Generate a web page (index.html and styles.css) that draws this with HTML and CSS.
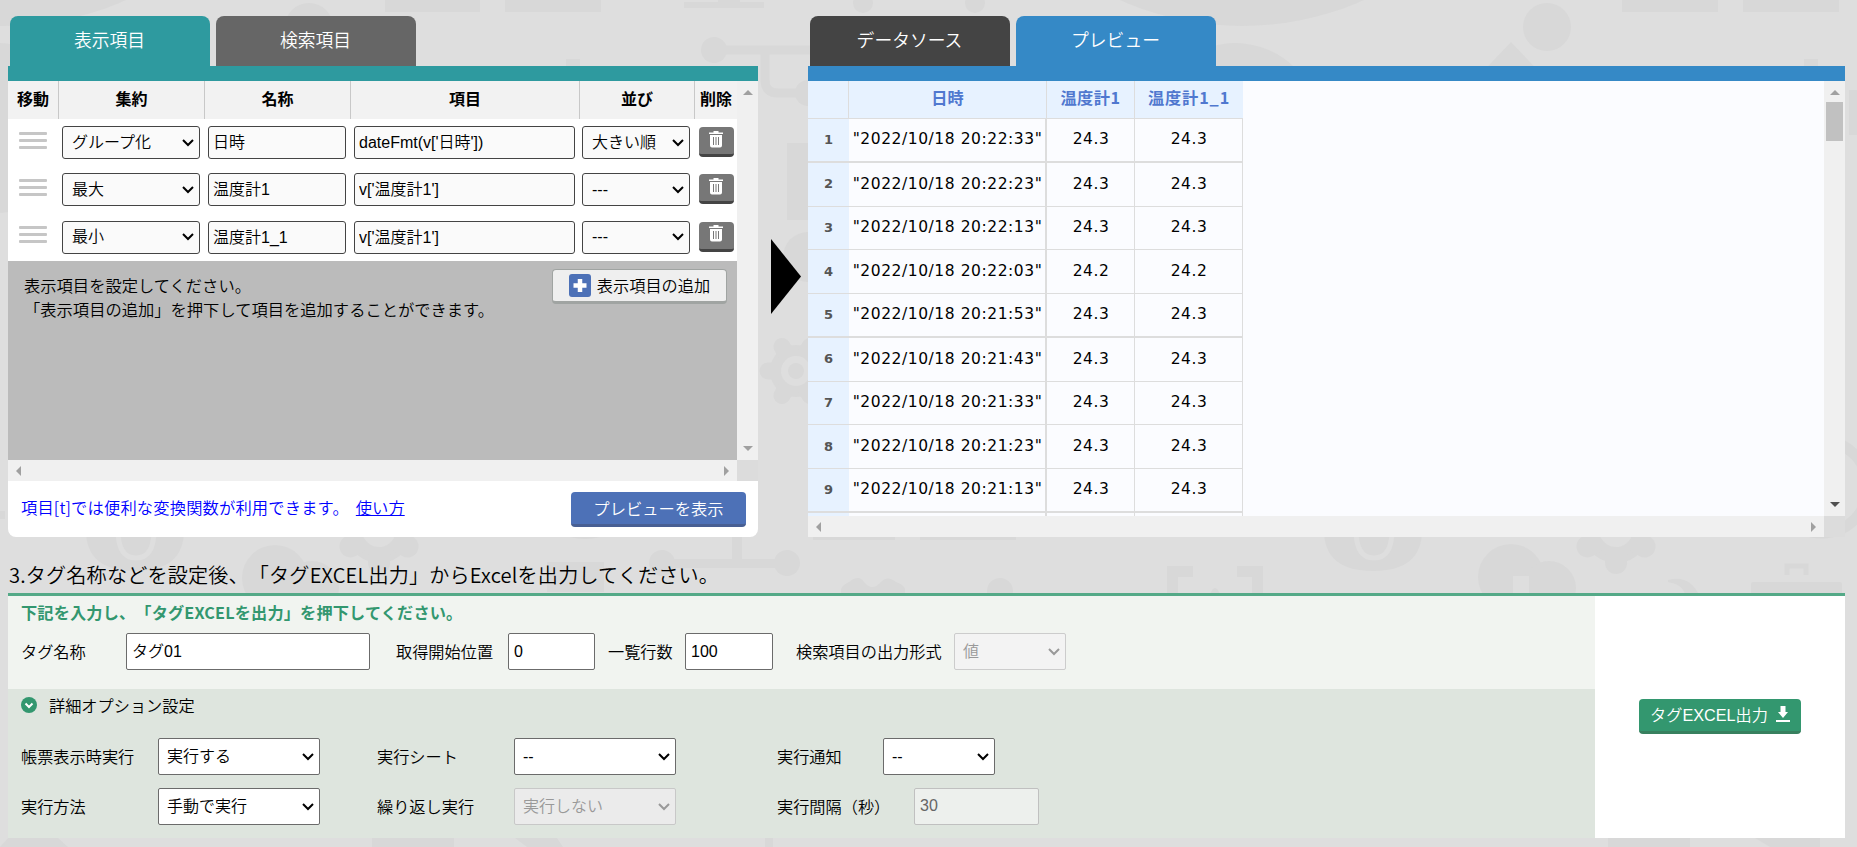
FILE: index.html
```
<!DOCTYPE html>
<html lang="ja">
<head>
  <meta charset="UTF-8" />
  <meta name="viewport" content="width=device-width, initial-scale=1.0"/>
  <title>タグEXCEL出力</title>
  <link rel="stylesheet" href="styles.css">
</head>
<body>
  <svg class="bg" viewBox="0 0 1857 847" fill="#d8d8d8">
    <circle cx="4" cy="-274" r="300"/>
    <circle cx="1242" cy="-274" r="300"/>
    <circle cx="-3" cy="128" r="85"/>
    <circle cx="1235" cy="128" r="85"/>
    <circle cx="309" cy="27" r="24"/>
    <circle cx="1547" cy="27" r="24"/>
    <path d="M1511 42l40 42h-80z"/>
    <path d="M385 0h95v12h-95zM505 0h96v12h-96zM1622 0h96v12h-96zM1743 0h96v12h-96z"/>
    <path d="M684 2h80v6h-80zM718 0h22v3h-22zM566 59h14v10h-14zM1804 59h14v10h-14z"/>
    <circle cx="863" cy="3" r="10"/>
    <circle cx="975" cy="3" r="10"/>
    <circle cx="714" cy="50" r="13"/>
    <circle cx="808" cy="93" r="13"/>
    <path d="M714 50h96M765 52v28q0 13 13 13h30" fill="none" stroke="#d8d8d8" stroke-width="9"/>
    <path d="M787 143h30v77h-30zM1849 90h10v45h-10zM0 175h8v35h-8zM0 511h5v8h-5z"/>
    <circle cx="808" cy="257" r="25"/>
    <!-- gears -->
    <g id="gear" transform="translate(796 371)">
      <circle r="26"/>
      <g stroke="#d8d8d8" stroke-width="17" stroke-linecap="round">
        <path d="M-28 0H28M-14 -24.500L14 24.500M14 -24.500L-14 24.500"/>
      </g>
      <circle r="15" fill="#dedede"/>
      <circle r="8"/>
    </g>
    <g id="gear-big" transform="translate(379 530) rotate(30)">
      <circle r="33"/>
      <g stroke="#d8d8d8" stroke-width="22" stroke-linecap="round">
        <path d="M-33 0H33M-16.500 -28.500L16.500 28.500M16.500 -28.500L-16.500 28.500"/>
      </g>
      <circle r="17" fill="#dedede"/>
    </g>
    <use href="#gear-big" transform="translate(1237 0)"/>
    <!-- microphones -->
    <g id="mic">
      <path d="M86 500h98v30q0 41-49 41t-49-41z"/>
      <path d="M118 530q0 28 18 28t18-28" fill="none" stroke="#dedede" stroke-width="5"/>
    </g>
    <use href="#mic" transform="translate(1238 0)"/>
    <circle cx="275" cy="578" r="33"/>
    <circle cx="1511" cy="577" r="33"/>
    <circle cx="312" cy="588" r="27"/>
    <circle cx="1549" cy="588" r="27"/>
    <path d="M1513 576h16v20h-16z" fill="#dedede"/>
    <ellipse cx="585" cy="533" rx="20" ry="6"/>
    <circle cx="662" cy="563" r="13"/>
    <circle cx="787" cy="563" r="13"/>
    <path d="M662 559h125v9h-125zM732 535h10v26h-10zM813 535h82v5h-82zM920 535h96v5h-96z"/>
    <path d="M547 562h57v30h-57z"/>
    <path d="M841 590q0-4 8-8 10-8 15 0 8 10 17 0 6-7 15 0 9 3 9 8v5h-64z"/>
    <circle cx="1000" cy="591" r="13"/>
    <path d="M1167 566h26v11h-15v20h-11zM1237 566h26v31h-11v-20h-15zM1209 597q6-18 12 0z"/>
    <path d="M1668 580q22-6 32 17h-15q0-12-17-15z"/>
    <path d="M1751 595v-11q0-2 3-2h86q2 0 2 2v11z"/>
    <path d="M1787 575v-9h19v9" fill="none" stroke="#d8d8d8" stroke-width="5"/>
    <g fill="none" stroke="#d8d8d8" stroke-width="11">
      <circle cx="1822" cy="487" r="46"/>
    </g>
    <path d="M1608 838h82v9h-82zM372 838h82v9h-82zM765 838h8v9h-8zM8 838h50l10 9H0zM515 838h42l6 9h-36zM1755 838h65v9h-50z"/>
  </svg>

  <main class="page">
    <div class="panels">
      <section class="panel-left">
        <div class="tabs">
          <div class="tab tab-teal">表示項目</div>
          <div class="tab tab-gray">検索項目</div>
        </div>
        <div class="bar bar-teal"></div>
        <div class="scroll-area">
          <div class="settings">
            <div class="row head">
              <div>移動</div><div>集約</div><div>名称</div><div>項目</div><div>並び</div><div>削除</div>
            </div>
            <div class="row item">
              <div class="grip"><i></i><i></i><i></i></div>
              <select><option>グループ化</option></select>
              <input type="text" value="日時">
              <input type="text" value="dateFmt(v['日時'])">
              <select><option>大きい順</option></select>
              <button class="trash"><svg width="14" height="17" viewBox="0 0 14 17"><path fill="#fff" d="M4.500 0h5v1.500H14V3H0V1.500h4.500zM1 4h12v10.500q0 2-2 2H3q-2 0-2-2z"/><path stroke="#777" d="M4.500 6v8M7 6v8M9.500 6v8"/></svg></button>
            </div>
            <div class="row item">
              <div class="grip"><i></i><i></i><i></i></div>
              <select><option>最大</option></select>
              <input type="text" value="温度計1">
              <input type="text" value="v['温度計1']">
              <select><option>---</option></select>
              <button class="trash"><svg width="14" height="17" viewBox="0 0 14 17"><path fill="#fff" d="M4.500 0h5v1.500H14V3H0V1.500h4.500zM1 4h12v10.500q0 2-2 2H3q-2 0-2-2z"/><path stroke="#777" d="M4.500 6v8M7 6v8M9.500 6v8"/></svg></button>
            </div>
            <div class="row item">
              <div class="grip"><i></i><i></i><i></i></div>
              <select><option>最小</option></select>
              <input type="text" value="温度計1_1">
              <input type="text" value="v['温度計1']">
              <select><option>---</option></select>
              <button class="trash"><svg width="14" height="17" viewBox="0 0 14 17"><path fill="#fff" d="M4.500 0h5v1.500H14V3H0V1.500h4.500zM1 4h12v10.500q0 2-2 2H3q-2 0-2-2z"/><path stroke="#777" d="M4.500 6v8M7 6v8M9.500 6v8"/></svg></button>
            </div>
            <div class="guide">
              <p>表示項目を設定してください。<br>「表示項目の追加」を押下して項目を追加することができます。</p>
              <button class="add"><svg width="22" height="23" viewBox="0 0 22 23"><rect width="22" height="23" rx="3" fill="#4d71b7"/><path d="M11 5v13M4.500 11.500h13" stroke="#fff" stroke-width="4.500"/></svg>表示項目の追加</button>
            </div>
          </div>
          <div class="vscroll"><span class="up"></span><span class="down"></span></div>
          <div class="hscroll"><span class="left"></span><span class="right"></span></div>
          <div class="corner"></div>
        </div>
        <div class="panel-foot">
          <p>項目[t]では便利な変換関数が利用できます。<a href="#">使い方</a></p>
          <button class="preview">プレビューを表示</button>
        </div>
      </section>

      <div class="arrow"></div>

      <section class="panel-right">
        <div class="tabs">
          <div class="tab tab-dark">データソース</div>
          <div class="tab tab-blue">プレビュー</div>
        </div>
        <div class="bar bar-blue"></div>
        <div class="scroll-area">
          <div class="data">
            <table>
              <tr><th></th><th>日時</th><th>温度計1</th><th>温度計1_1</th></tr>
              <tr><th>1</th><td>"2022/10/18 20:22:33"</td><td>24.3</td><td>24.3</td></tr>
              <tr><th>2</th><td>"2022/10/18 20:22:23"</td><td>24.3</td><td>24.3</td></tr>
              <tr><th>3</th><td>"2022/10/18 20:22:13"</td><td>24.3</td><td>24.3</td></tr>
              <tr><th>4</th><td>"2022/10/18 20:22:03"</td><td>24.2</td><td>24.2</td></tr>
              <tr><th>5</th><td>"2022/10/18 20:21:53"</td><td>24.3</td><td>24.3</td></tr>
              <tr><th>6</th><td>"2022/10/18 20:21:43"</td><td>24.3</td><td>24.3</td></tr>
              <tr><th>7</th><td>"2022/10/18 20:21:33"</td><td>24.3</td><td>24.3</td></tr>
              <tr><th>8</th><td>"2022/10/18 20:21:23"</td><td>24.3</td><td>24.3</td></tr>
              <tr><th>9</th><td>"2022/10/18 20:21:13"</td><td>24.3</td><td>24.3</td></tr>
              <tr><th></th><td></td><td></td><td></td></tr>
            </table>
          </div>
          <div class="vscroll"><span class="up"></span><span class="thumb"></span><span class="down active"></span></div>
          <div class="hscroll"><span class="left"></span><span class="right"></span></div>
          <div class="corner"></div>
        </div>
      </section>
    </div>

    <h2>3.タグ名称などを設定後、「タグEXCEL出力」からExcelを出力してください。</h2>

    <div class="output">
      <div class="form">
        <div class="basic">
          <div class="lead">下記を入力し、「タグEXCELを出力」を押下してください。</div>
          <div class="fields">
            <label class="l-tag">タグ名称</label><input type="text" class="i-tag" value="タグ01">
            <label class="l-start">取得開始位置</label><input type="text" class="i-start" value="0">
            <label class="l-rows">一覧行数</label><input type="text" class="i-rows" value="100">
            <label class="l-type">検索項目の出力形式</label><select class="i-type" disabled><option>値</option></select>
          </div>
        </div>
        <div class="detail">
          <div class="detail-title">
            <svg width="16" height="16" viewBox="0 0 16 16"><circle cx="8" cy="8" r="8" fill="#33976f"/><path d="M4.500 6.500L8 10l3.500-3.500" fill="none" stroke="#fff" stroke-width="2"/></svg>
            <span>詳細オプション設定</span>
          </div>
          <div class="options">
            <label>帳票表示時実行</label><select><option>実行する</option></select>
            <label>実行シート</label><select><option>--</option></select>
            <label>実行通知</label><select class="i-notice"><option>--</option></select>
            <label>実行方法</label><select><option>手動で実行</option></select>
            <label>繰り返し実行</label><select class="off" disabled><option>実行しない</option></select>
            <label>実行間隔（秒）</label><input type="text" class="i-sec" value="30" disabled>
          </div>
        </div>
      </div>
      <div class="export">
        <button>タグEXCEL出力<svg width="14" height="16" viewBox="0 0 14 16"><path fill="#fff" d="M4.500 0h5v6h2.500L7 12 2 6h2.500zM0 14h14v2H0z"/></svg></button>
      </div>
    </div>
  </main>
</body>
</html>
```
FILE: styles.css
```
* {
  box-sizing: border-box;
}

body {
  margin: 0;
  width: 1857px;
  height: 847px;
  overflow: hidden;
  background: #dedede;
  color: #000;
  font-family: "Noto Sans CJK JP", sans-serif;
  font-size: 16.2px;
  font-weight: 350;
  line-height: 24px;
  text-spacing-trim: space-all;
}

p, h2 {
  margin: 0;
  white-space: nowrap;
}

button, input, select {
  font-family: "Liberation Sans", "Noto Sans CJK JP", sans-serif;
  font-size: 16px;
  font-weight: 350;
  color: #000;
  margin: 0;
}

.bg {
  position: absolute;
  top: 0;
  left: 0;
  width: 1857px;
  height: 847px;
}

.page {
  position: relative;
  padding: 16px 12px 0 8px;
}

.panels {
  display: flex;
  height: 521px;
}

.panel-left {
  width: 750px;
}

.panel-right {
  width: 1037px;
}

/* tabs */
.tabs {
  display: flex;
  gap: 6px;
  height: 50px;
  padding-left: 2px;
}

.tab {
  width: 200px;
  padding: 11px 1px 0 0;
  border-radius: 8px 8px 0 0;
  color: #fff;
  font-size: 17.8px;
  text-align: center;
}

.tab-teal, .bar-teal {
  background: #2e9a9f;
}

.tab-gray {
  background: #666;
}

.tab-dark {
  background: #444;
}

.tab-blue, .bar-blue {
  background: #3589c6;
}

.bar {
  height: 15px;
}

/* scroll boxes */
.scroll-area {
  display: grid;
  grid-template-columns: 1fr 21px;
  grid-template-rows: 379px 21px;
}

.panel-right .scroll-area {
  grid-template-rows: 435px 21px;
}

.vscroll, .hscroll {
  display: flex;
  justify-content: space-between;
  align-items: center;
  background: #f0f0f0;
}

.vscroll {
  flex-direction: column;
  padding: 9px 0;
}

.hscroll {
  padding: 0 8px;
}

.up, .down {
  border: 5px solid transparent;
  border-top-width: 0;
  border-bottom: 5px solid #a0a0a0;
}

.down {
  border-bottom-width: 0;
  border-top: 5px solid #a0a0a0;
}

.down.active {
  border-top-color: #505050;
}

.left, .right {
  border: 5px solid transparent;
  border-left-width: 0;
  border-right: 5px solid #a0a0a0;
}

.right {
  border-right-width: 0;
  border-left: 5px solid #a0a0a0;
}

.thumb {
  width: 17px;
  height: 39px;
  margin: 7px 0 auto;
  background: #c1c1c1;
}

.corner {
  background: #dcdcdc;
}

/* column settings */
.settings {
  display: flex;
  flex-direction: column;
  background: #fff;
}

.row {
  display: grid;
  grid-template-columns: 51px 146px 146px 229px 115px 42px;
}

.head {
  height: 38px;
  background: #f2f2f2;
  font-size: 16px;
  font-weight: bold;
  line-height: 34px;
  text-align: center;
}

.head div {
  border-right: 1px solid #c8c8c8;
}

.head div:last-child {
  border-right: none;
}

.item {
  height: 47.33px;
  align-items: center;
}

.item select, .item input {
  width: 138px;
  height: 33px;
  margin-left: 3px;
  background-color: #fafafa;
  border-color: #444;
  border-radius: 3px;
  padding: 0 0 3px 4px;
}

.item input:nth-of-type(2) {
  width: 221px;
}

.item select {
  padding: 0 0 1px 9px;
}

.item select:nth-of-type(2) {
  width: 108px;
  margin-left: 2px;
}

.grip {
  display: flex;
  flex-direction: column;
  gap: 4px;
  width: 28px;
  margin: -5px 0 0 11px;
}

.grip i {
  height: 3px;
  border-radius: 1px;
  background: #c6c6c6;
}

.trash {
  width: 35px;
  height: 30px;
  margin-left: 4px;
  margin-top: -1px;
  padding: 0 1px 0 0;
  background: #777;
  border: none;
  border-bottom: 3px solid #444;
  border-radius: 4px;
}

.trash svg {
  display: block;
  margin: 0 auto 3px;
}

.guide {
  display: flex;
  flex: 1;
  justify-content: space-between;
  align-items: flex-start;
  padding: 8px 10px 0 16px;
  background: #bbb;
}

.guide p {
  padding-top: 4px;
  font-size: 16.3px;
}

.add {
  display: flex;
  align-items: center;
  justify-content: center;
  gap: 6px;
  width: 175px;
  height: 35px;
  margin-left: -40px;
  background: #efefef;
  border: 1px solid #a0a4a2;
  border-bottom-width: 3px;
  border-radius: 4px;
  padding: 0;
  font-size: 16.2px;
  white-space: nowrap;
}

.panel-foot {
  display: flex;
  justify-content: space-between;
  height: 56px;
  padding: 11px 12px 0 13px;
  background: #fff;
  border-radius: 0 0 8px 8px;
  color: #00f;
}

.panel-foot p {
  padding-top: 3px;
  font-size: 16.3px;
  letter-spacing: 0.15px;
}

.panel-foot a {
  margin-left: 7px;
  color: #00f;
  letter-spacing: 0;
}

.preview {
  width: 175px;
  height: 35px;
  background: #4d71b7;
  border: none;
  border-bottom: 3px solid #485f93;
  border-radius: 4px;
  padding: 0 6px 1px;
  color: #fff;
  font-size: 16.3px;
  white-space: nowrap;
}

.arrow {
  width: 30px;
  height: 75px;
  margin: 223px 7px 0 13px;
  background: #000;
  clip-path: polygon(0 0, 100% 50%, 0 100%);
}

/* preview table */
.data {
  overflow: hidden;
  background: #fbfcff;
}

table {
  width: 435px;
  table-layout: fixed;
  border-collapse: separate;
  border-spacing: 0;
  font-family: "DejaVu Sans", "Noto Sans CJK JP", sans-serif;
  font-weight: 400;
  text-align: center;
}

tr {
  height: 43.75px;
}

tr:first-child {
  height: 38px;
}

th, td {
  padding: 0 0 5px;
  border-right: 1px solid #ddd;
  border-bottom: 1px solid #ddd;
  white-space: nowrap;
}

td {
  padding: 0 0 1px 1px;
  font-size: 15.500px;
  letter-spacing: 0.550px;
}

th {
  background: #e7f2ff;
  color: #5078cf;
  font-family: "Noto Sans CJK JP", sans-serif;
  font-size: 16.200px;
}

tr:first-child th:nth-child(1) {
  width: 41px;
}

tr:first-child th:nth-child(2) {
  width: 198px;
}

tr:first-child th:nth-child(3) {
  width: 88px;
}

tr:first-child th:nth-child(3) {
  letter-spacing: 0.5px;
}

tr:first-child th:last-child {
  border-right: none;
  letter-spacing: 0.9px;
}

td:nth-child(2) {
  border-right-width: 2px;
}

tr:nth-child(4n+2) td, tr:nth-child(4n+2) th {
  border-bottom-width: 2px;
}

tr + tr th {
  border-right: none;
  padding: 0;
  color: #555;
  font-family: "DejaVu Sans", sans-serif;
  font-size: 13px;
}

/* output form */
h2 {
  height: 56px;
  padding: 22px 0 0 1px;
  font-size: 20.1px;
  font-weight: 350;
  letter-spacing: 0.18px;
  line-height: 32px;
}

.output {
  display: flex;
  height: 245px;
  border-top: 3px solid #54a987;
}

.form {
  width: 1587px;
}

.basic {
  height: 93px;
  padding: 4px 0 0 13px;
  background: #f1f4f0;
}

.lead {
  color: #33976f;
  font-weight: bold;
  letter-spacing: 0.15px;
}

.fields {
  display: flex;
  align-items: center;
  margin-top: 9px;
}

.fields label, .options label {
  padding-bottom: 2px;
}

.l-tag {
  width: 105px;
}

.l-start {
  width: 112px;
}

.l-rows {
  width: 77px;
}

.l-type {
  width: 158px;
}

input, select {
  height: 37px;
  padding: 0 0 3px 5px;
  border: 1px solid #6b6b6b;
  border-radius: 2px;
  background-color: #fff;
}

select {
  appearance: none;
  padding: 0 0 0 8px;
  background-image: url("data:image/svg+xml,%3Csvg xmlns='http://www.w3.org/2000/svg' width='12' height='8'%3E%3Cpath d='M1 1l5 5 5-5' fill='none' stroke='%23000' stroke-width='2'/%3E%3C/svg%3E");
  background-repeat: no-repeat;
  background-position: right 5px center;
}

select:disabled, input:disabled {
  color: #999;
  border-color: #ccc;
  background-color: #f3f3f3;
  opacity: 1;
}

select:disabled {
  background-image: url("data:image/svg+xml,%3Csvg xmlns='http://www.w3.org/2000/svg' width='12' height='8'%3E%3Cpath d='M1 1l5 5 5-5' fill='none' stroke='%23999' stroke-width='2'/%3E%3C/svg%3E");
}

.i-tag {
  width: 244px;
  margin-right: 26px;
}

.i-start {
  width: 87px;
  margin-right: 13px;
  padding-bottom: 0;
}

.i-rows {
  width: 88px;
  margin-right: 23px;
  padding-bottom: 0;
}

.i-type {
  width: 112px;
}

.detail {
  height: 149px;
  padding: 4px 0 0 13px;
  background: #dee5de;
}

.detail-title {
  display: flex;
  align-items: center;
  gap: 12px;
}

.options {
  display: grid;
  grid-template-columns: 137px 219px 137px 263px 106px 200px;
  row-gap: 13px;
  align-items: center;
  margin-top: 21px;
}

.options label {
  white-space: nowrap;
}

.options select {
  width: 162px;
}

.options .i-notice {
  width: 112px;
}

.options .off {
  background-color: #ebebeb;
  border-color: #c8c8c8;
}

.options .i-sec {
  width: 125px;
  margin-left: 31px;
  padding-bottom: 1px;
  background-color: #edf0ed;
  border-color: #c0c0c0;
  color: #666;
}

.export {
  display: flex;
  flex: 1;
  align-items: center;
  justify-content: center;
  padding-bottom: 2px;
  background: #fff;
}

.export button {
  display: flex;
  align-items: center;
  justify-content: center;
  gap: 8px;
  width: 162px;
  height: 35px;
  padding: 0 0 2px;
  background: #33976f;
  border: none;
  border-bottom: 3px solid #38805f;
  border-radius: 4px;
  color: #fff;
  font-size: 16.2px;
  white-space: nowrap;
}
```
